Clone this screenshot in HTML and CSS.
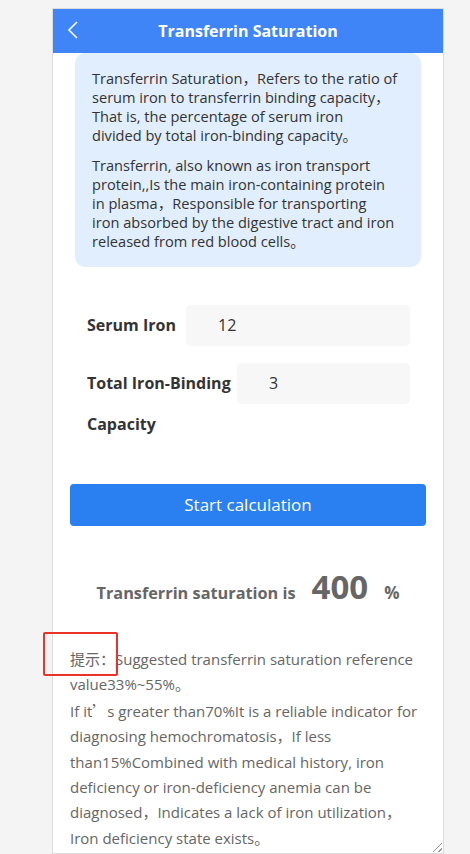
FILE: index.html
```html
<!DOCTYPE html>
<html lang="en">
<head>
<meta charset="utf-8">
<title>Transferrin Saturation</title>
<link rel="stylesheet" href="styles.css">
</head>
<body>
<div class="frame">
  <header class="topbar">
    <svg class="back" width="12" height="18" viewBox="0 0 12 18"><path d="M10 1 L2 9 L10 17" fill="none" stroke="#fff" stroke-width="1.6"/></svg>
    <h1 class="title">Transferrin Saturation</h1>
  </header>
  <section class="intro">
    <p>Transferrin Saturation，Refers to the ratio of<br>serum iron to transferrin binding capacity，<br>That is, the percentage of serum iron<br>divided by total iron-binding capacity。</p>
    <p>Transferrin, also known as iron transport<br>protein,,Is the main iron-containing protein<br>in plasma，Responsible for transporting<br>iron absorbed by the digestive tract and iron<br>released from red blood cells。</p>
  </section>
  <form class="form">
    <div class="row">
      <label class="label">Serum Iron</label>
      <div class="input wide">12</div>
    </div>
    <div class="row row2">
      <label class="label">Total Iron-Binding Capacity</label>
      <div class="input narrow">3</div>
    </div>
  </form>
  <div class="btn">Start calculation</div>
  <div class="result">
    <span class="res-label">Transferrin saturation is</span>
    <span class="res-num">400</span>
    <span class="res-unit">%</span>
  </div>
  <div class="tip">
    <span class="cjk">提示：</span>Suggested transferrin saturation reference value33%~55%。<br>If it<span class="cjk">’</span>s greater than70%It is a reliable indicator for diagnosing hemochromatosis，If less than15%Combined with medical history, iron deficiency or iron-deficiency anemia can be diagnosed，Indicates a lack of iron utilization，Iron deficiency state exists。
  </div>
  <div class="grip"></div>
</div>
<div class="mark"></div>
</body>
</html>
```

FILE: styles.css
```css
html, body {
  margin: 0;
  padding: 0;
}
body {
  background: #f4f4f4;
  font-family: "Segoe UI", "Open Sans", "Noto Sans CJK SC", sans-serif;
  color: #333;
  width: 470px;
  height: 854px;
  overflow: hidden;
  position: relative;
}
.frame {
  position: relative;
  margin: 8px 0 0 52px;
  width: 390px;
  height: 844px;
  border: 1px solid #dcdcdc;
  background: #fff;
  overflow: hidden;
}
.topbar {
  height: 44px;
  background: #3f85f8;
  display: flex;
  align-items: center;
  justify-content: center;
  position: relative;
}
.back {
  position: absolute;
  left: 14px;
  top: 12px;
}
.title {
  margin: 0;
  color: #fff;
  font-size: 16px;
  font-weight: 700;
}
.intro {
  margin: 0 22px;
  background: #e1eefd;
  border-radius: 10px;
  padding: 16px 6px 16px 17px;
  font-size: 14.6px;
  line-height: 19px;
  color: #333;
  white-space: nowrap;
}
.intro p {
  margin: 0;
}
.intro p + p {
  margin-top: 11px;
}
.form {
  margin: 38px 33px 0 34px;
}
.row {
  display: flex;
  align-items: flex-start;
}
.row2 {
  margin-top: 17px;
}
.label {
  flex: 1 1 auto;
  font-size: 16px;
  font-weight: 700;
  line-height: 41px;
  color: #333;
}
.input {
  flex: none;
  height: 41px;
  line-height: 41px;
  background: #f7f7f7;
  border-radius: 5px;
  padding-left: 32px;
  box-sizing: border-box;
  font-size: 16px;
  color: #333;
}
.wide { width: 224px; }
.narrow { width: 173px; }
.btn {
  margin: 39px 17px 0 17px;
  height: 42px;
  line-height: 42px;
  background: #2a7ff1;
  border-radius: 4px;
  color: #fff;
  text-align: center;
  font-size: 17px;
}
.result {
  margin-top: 38px;
  display: flex;
  justify-content: center;
  align-items: baseline;
  gap: 16px;
  color: #666;
  font-weight: 700;
}
.res-label { font-size: 16.3px; }
.res-num { font-size: 33px; }
.res-unit { font-size: 17px; }
.tip {
  margin: 37px 17px 0 17px;
  font-size: 15px;
  line-height: 25.4px;
  color: #666;
}
.cjk {
  font-family: "Noto Sans CJK SC", sans-serif;
}
.grip {
  position: absolute;
  right: 1px;
  bottom: 1px;
  width: 12px;
  height: 12px;
  background: repeating-linear-gradient(135deg, transparent 0 2px, #999 2px 3px, transparent 3px 4px);
  clip-path: polygon(100% 0, 100% 100%, 0 100%);
}
.mark {
  position: absolute;
  left: 43px;
  top: 632px;
  width: 71px;
  height: 40px;
  border: 2px solid #e8322b;
  border-radius: 2px;
}
```
